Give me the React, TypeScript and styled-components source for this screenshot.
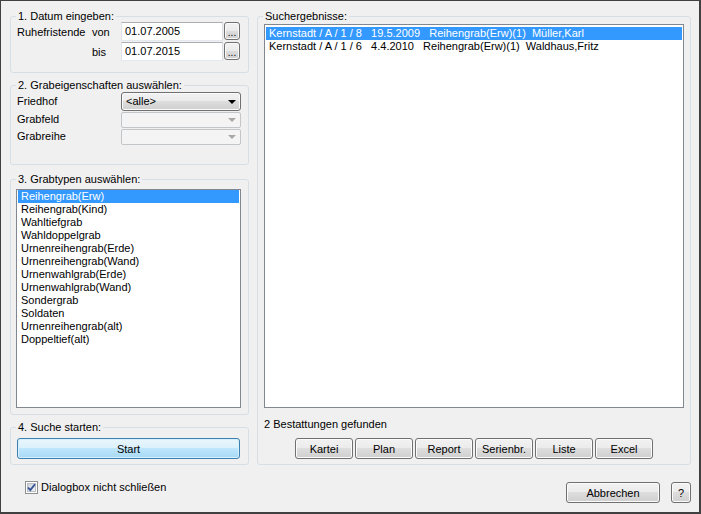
import React from 'react';
import styled, { createGlobalStyle, css } from 'styled-components';

const GlobalStyle = createGlobalStyle`
  html, body {
    margin: 0;
    padding: 0;
    background: #f0f0f0;
  }
  body {
    font-family: "Liberation Sans", Arial, sans-serif;
    font-size: 11px;
    color: #000;
  }
`;

const grabtypen = [
  'Reihengrab(Erw)',
  'Reihengrab(Kind)',
  'Wahltiefgrab',
  'Wahldoppelgrab',
  'Urnenreihengrab(Erde)',
  'Urnenreihengrab(Wand)',
  'Urnenwahlgrab(Erde)',
  'Urnenwahlgrab(Wand)',
  'Sondergrab',
  'Soldaten',
  'Urnenreihengrab(alt)',
  'Doppeltief(alt)',
];

const ergebnisse = [
  'Kernstadt / A / 1 / 8   19.5.2009   Reihengrab(Erw)(1)  Müller,Karl',
  'Kernstadt / A / 1 / 6   4.4.2010   Reihengrab(Erw)(1)  Waldhaus,Fritz',
];

const aktionen = ['Kartei', 'Plan', 'Report', 'Serienbr.', 'Liste', 'Excel'];

const Window = styled.div`
  width: 701px;
  height: 514px;
  box-sizing: border-box;
  border-style: solid;
  border-color: #404040;
  border-width: 1px 2px 2px 1px;
  background: #f0f0f0;
  display: flex;
  flex-direction: column;
  overflow: hidden;
`;

const Main = styled.div`
  display: flex;
  align-items: flex-start;
  gap: 8px;
  padding: 9px 0 0 9px;
`;

const LeftColumn = styled.div`
  width: 239px;
  display: flex;
  flex-direction: column;
`;

const Group = styled.fieldset<{ $mt?: number; $w?: number }>`
  margin: ${p => p.$mt ?? 0}px 0 0 0;
  padding: 0;
  border: 1px solid #d5dfe5;
  border-radius: 3px;
  min-width: 0;
  ${p => p.$w && css`width: ${p.$w}px; box-sizing: border-box;`}
`;

const Legend = styled.legend`
  margin-left: 5px;
  padding: 0 2px;
  line-height: 12px;
  height: 12px;
`;

const GroupBody = styled.div<{ $pad: string }>`
  padding: ${p => p.$pad};
`;

const DateGrid = styled.div`
  display: grid;
  grid-template-columns: 75px 29px 102px 17px;
  grid-auto-rows: 20px;
  align-items: center;
`;

const FieldLabel = styled.span`
  line-height: 13px;
`;

const TextBox = styled.div`
  height: 19px;
  box-sizing: border-box;
  align-self: start;
  border: 1px solid;
  border-color: #abadb3 #dbdfe6 #e3e9ef #e2e3ea;
  background: #fff;
  padding-left: 3px;
  line-height: 17px;
`;

const buttonFace = css`
  border: 1px solid #707070;
  border-radius: 3px;
  background: linear-gradient(#f2f2f2 0%, #ebebeb 50%, #dddddd 50%, #cfcfcf 100%);
  box-shadow: inset 0 0 0 1px #fbfbfb;
`;

const DotsButton = styled.div`
  ${buttonFace};
  justify-self: end;
  align-self: start;
  width: 16px;
  height: 18px;
  box-sizing: border-box;
  text-align: center;
  line-height: 20px;
  font-size: 10px;
`;

const PropRow = styled.div<{ $h: number }>`
  display: flex;
  align-items: flex-start;
  height: ${p => p.$h}px;
`;

const PropLabel = styled.span<{ $top: number }>`
  width: 104px;
  margin-top: ${p => p.$top}px;
  line-height: 13px;
`;

const Combo = styled.div<{ $h: number; $disabled?: boolean }>`
  position: relative;
  width: 120px;
  height: ${p => p.$h}px;
  box-sizing: border-box;
  padding-left: 4px;
  line-height: ${p => p.$h - 2}px;
  ${p =>
    p.$disabled
      ? css`
          border: 1px solid #c3c6c9;
          border-radius: 2px;
          background: #f4f4f4;
        `
      : buttonFace};
`;

const ComboArrow = styled.span<{ $disabled?: boolean }>`
  position: absolute;
  right: 4px;
  top: 50%;
  margin-top: -2px;
  width: 0;
  height: 0;
  border-left: 4px solid transparent;
  border-right: 4px solid transparent;
  border-top: 4px solid ${p => (p.$disabled ? '#a8a8a8' : '#000')};
`;

const ListBox = styled.div<{ $w: number; $h: number; $pad: string }>`
  width: ${p => p.$w}px;
  height: ${p => p.$h}px;
  box-sizing: border-box;
  border: 1px solid #828790;
  background: #fff;
  padding: ${p => p.$pad};
  overflow: hidden;
`;

const ListItem = styled.div<{ $selected?: boolean }>`
  height: 13px;
  line-height: 13px;
  padding-left: 3px;
  white-space: pre;
  ${p =>
    p.$selected &&
    css`
      background: #3399ff;
      color: #fff;
    `}
`;

const Button = styled.button<{ $w: number; $default?: boolean }>`
  ${buttonFace};
  width: ${p => p.$w}px;
  height: 21px;
  box-sizing: border-box;
  padding: 0;
  font-family: inherit;
  font-size: 11px;
  color: #000;
  ${p =>
    p.$default &&
    css`
      border-color: #3c7fb1;
      background: linear-gradient(#eaf6fd 0%, #d9f0fc 50%, #bee6fd 50%, #a7d9f5 100%);
      box-shadow: inset 0 0 0 1px #d7f0fb;
    `}
`;

const StatusText = styled.div`
  margin-top: 10px;
  line-height: 13px;
`;

const ButtonRow = styled.div`
  margin-top: 7px;
  width: 420px;
  display: flex;
  justify-content: center;
  gap: 2px;
`;

const Footer = styled.div`
  flex: 1;
  display: flex;
  align-items: flex-start;
  padding: 17px 8px 0 24px;
`;

const CheckLabel = styled.label`
  display: flex;
  align-items: center;
  gap: 3px;
  margin-top: -1px;
  line-height: 13px;
`;

const FooterButtons = styled.div`
  margin-left: auto;
  display: flex;
  gap: 11px;
`;

const CheckBox = () => (
  <svg width="13" height="13" viewBox="0 0 13 13">
    <defs>
      <linearGradient id="cbg" x1="0" y1="0" x2="1" y2="1">
        <stop offset="0" stopColor="#cbcfd5" />
        <stop offset="1" stopColor="#f6f6f6" />
      </linearGradient>
    </defs>
    <rect x="0.5" y="0.5" width="12" height="12" fill="#fff" stroke="#8e8f8f" />
    <rect x="2.5" y="2.5" width="8" height="8" fill="url(#cbg)" stroke="#b9bec4" />
    <path d="M3 6.5 L5.3 9 L10 3.2" fill="none" stroke="#2f4f95" strokeWidth="1.8" />
  </svg>
);

export default function App() {
  return (
    <>
      <GlobalStyle />
      <Window>
        <Main>
          <LeftColumn>
            <Group>
              <Legend>1. Datum eingeben:</Legend>
              <GroupBody $pad="0 7px 10px 6px">
                <DateGrid>
                  <FieldLabel>Ruhefristende</FieldLabel>
                  <FieldLabel>von</FieldLabel>
                  <TextBox>01.07.2005</TextBox>
                  <DotsButton>...</DotsButton>
                  <span />
                  <FieldLabel>bis</FieldLabel>
                  <TextBox>01.07.2015</TextBox>
                  <DotsButton>...</DotsButton>
                </DateGrid>
              </GroupBody>
            </Group>

            <Group $mt={6}>
              <Legend>2. Grabeigenschaften auswählen:</Legend>
              <GroupBody $pad="1px 7px 18px 6px">
                <PropRow $h={20}>
                  <PropLabel $top={3}>Friedhof</PropLabel>
                  <Combo $h={19}>
                    &lt;alle&gt;
                    <ComboArrow />
                  </Combo>
                </PropRow>
                <PropRow $h={17}>
                  <PropLabel $top={1}>Grabfeld</PropLabel>
                  <Combo $h={16} $disabled>
                    <ComboArrow $disabled />
                  </Combo>
                </PropRow>
                <PropRow $h={17}>
                  <PropLabel $top={1}>Grabreihe</PropLabel>
                  <Combo $h={16} $disabled>
                    <ComboArrow $disabled />
                  </Combo>
                </PropRow>
              </GroupBody>
            </Group>

            <Group $mt={8}>
              <Legend>3. Grabtypen auswählen:</Legend>
              <GroupBody $pad="4px 7px 6px 5px">
                <ListBox $w={225} $h={219} $pad="0 1px">
                  {grabtypen.map((t, i) => (
                    <ListItem key={t} $selected={i === 0}>
                      {t}
                    </ListItem>
                  ))}
                </ListBox>
              </GroupBody>
            </Group>

            <Group $mt={6}>
              <Legend>4. Suche starten:</Legend>
              <GroupBody $pad="5px 8px 5px 6px">
                <Button $w={223} $default>
                  Start
                </Button>
              </GroupBody>
            </Group>
          </LeftColumn>

          <Group $w={434}>
            <Legend>Suchergebnisse:</Legend>
            <GroupBody $pad="2px 6px 5px 6px">
              <ListBox $w={420} $h={384} $pad="2px 1px">
                {ergebnisse.map((e, i) => (
                  <ListItem key={e} $selected={i === 0}>
                    {e}
                  </ListItem>
                ))}
              </ListBox>
              <StatusText>2 Bestattungen gefunden</StatusText>
              <ButtonRow>
                {aktionen.map(a => (
                  <Button key={a} $w={58}>
                    {a}
                  </Button>
                ))}
              </ButtonRow>
            </GroupBody>
          </Group>
        </Main>

        <Footer>
          <CheckLabel>
            <CheckBox />
            Dialogbox nicht schließen
          </CheckLabel>
          <FooterButtons>
            <Button $w={94}>Abbrechen</Button>
            <Button $w={20}>?</Button>
          </FooterButtons>
        </Footer>
      </Window>
    </>
  );
}
